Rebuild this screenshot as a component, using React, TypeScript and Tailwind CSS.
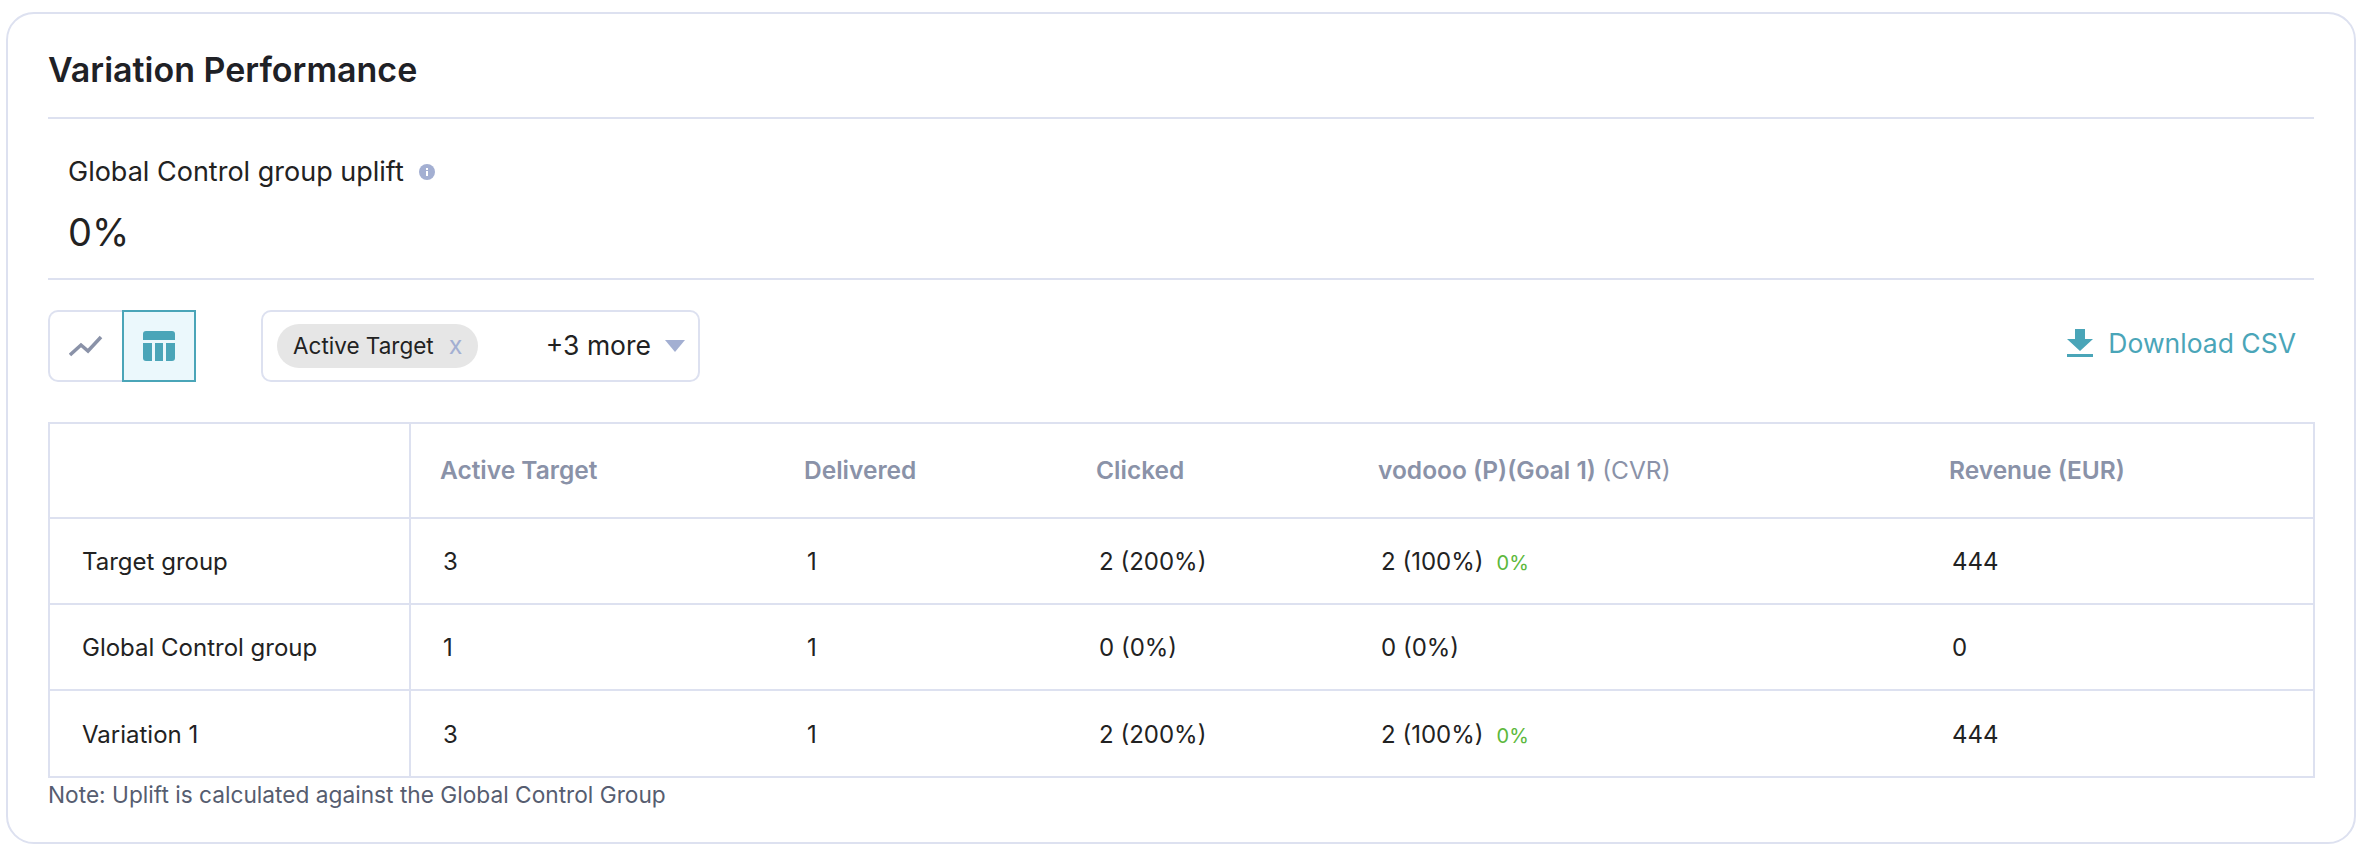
const rows = [
  { name: "Target group", active: "3", delivered: "1", clicked: "2 (200%)", goal: "2 (100%)", up: true, revenue: "444", height: "h-[86px]" },
  { name: "Global Control group", active: "1", delivered: "1", clicked: "0 (0%)", goal: "0 (0%)", up: false, revenue: "0", height: "h-[86px]" },
  { name: "Variation 1", active: "3", delivered: "1", clicked: "2 (200%)", goal: "2 (100%)", up: true, revenue: "444", height: "h-[87px]" },
];

function Header({ children, className = "" }: { children?: React.ReactNode; className?: string }) {
  return <th className={`border-y-2 border-[#dde1f0] pl-[29px] text-left text-[24.5px] font-semibold text-[#8a92a8] ${className}`}>{children}</th>;
}

function Cell({ children, className = "" }: { children?: React.ReactNode; className?: string }) {
  return <td className={`border-y-2 border-[#dde1f0] pl-[32px] pt-[2px] text-[24px] text-[#222222] ${className}`}>{children}</td>;
}

export default function App() {
  return (
    <div className="min-h-[854px] bg-white pl-[6px] pt-[12px] font-['Inter','Liberation_Sans',sans-serif]">
      <div className="h-[832px] w-[2350px] rounded-[28px] border-2 border-[#dde1f0] px-[40px]">
        <div className="flex h-[105px] items-center border-b-2 border-[#dde1f0] pt-[7px]">
          <h1 className="text-[34px] font-semibold text-[#1f2126]">Variation Performance</h1>
        </div>
        <div className="h-[161px] border-b-2 border-[#dde1f0] pl-[20px] pt-[37px]">
          <div className="flex items-center gap-[15px] text-[27px] leading-[32px] text-[#222222]">
            Global Control group uplift
            <svg width="16" height="16" viewBox="0 0 16 16" aria-hidden="true">
              <circle cx="8" cy="8" r="8" fill="#a3afd2" />
              <rect x="7" y="7" width="2" height="5" fill="white" />
              <rect x="7" y="4" width="2" height="2" fill="white" />
            </svg>
          </div>
          <div className="mt-[20px] text-[38px] leading-[48px] text-[#222222]">0%</div>
        </div>
        <div className="flex items-center pt-[30px]">
          <div className="flex h-[72px] w-[148px]">
            <button className="flex w-[74px] items-center justify-center rounded-l-[10px] border-2 border-r-0 border-[#dde1f0]">
              <svg width="34" height="24" viewBox="0 0 34 24" fill="none" stroke="#8a92a8" strokeWidth="3.5" aria-hidden="true">
                <path d="M1 21 L12 11 L19 17 L32 3" />
              </svg>
            </button>
            <button className="flex w-[74px] items-center justify-center border-2 border-[#4aa5b8] bg-[#ebf8fc]">
              <svg width="32" height="30" viewBox="0 0 32 30" fill="#4aa5b8" aria-hidden="true">
                <path d="M3 0 H29 A3 3 0 0 1 32 3 V9 H0 V3 A3 3 0 0 1 3 0 Z" />
                <path d="M0 12 H9 V30 H3 A3 3 0 0 1 0 27 Z" />
                <rect x="12" y="12" width="8" height="18" />
                <path d="M23 12 H32 V27 A3 3 0 0 1 29 30 H23 Z" />
              </svg>
            </button>
          </div>
          <div className="ml-[65px] flex h-[72px] w-[439px] items-center rounded-[10px] border-2 border-[#dde1f0] pl-[14px] pr-[13px]">
            <div className="flex h-[44px] w-[201px] items-center rounded-full bg-[#e6e6e6] pl-[16px] text-[22.5px] text-[#222222]">
              Active Target
              <span className="ml-[15px] text-[25px] text-[#a3afd2]">x</span>
            </div>
            <span className="ml-auto text-[26.5px] text-[#222222]">+3 more</span>
            <svg className="ml-[14px]" width="20" height="12" viewBox="0 0 20 12" aria-hidden="true">
              <path d="M0 0 H20 L10 12 Z" fill="#a3afd2" />
            </svg>
          </div>
          <a className="mb-[5px] ml-auto mr-[18px] flex items-center gap-[14px] text-[26.5px] text-[#4aa5b8]">
            <svg width="28" height="29" viewBox="0 0 28 29" fill="#4aa5b8" aria-hidden="true">
              <path d="M9 0 H19 V10 H27 L14 22 L1 10 H9 Z" />
              <rect x="1" y="25" width="26" height="3" />
            </svg>
            Download CSV
          </a>
        </div>
        <table className="mt-[40px] w-[2265px] table-fixed border-collapse border-2 border-[#dde1f0]">
          <colgroup>
            <col className="w-[361px]" />
            <col className="w-[365px]" />
            <col className="w-[292px]" />
            <col className="w-[282px]" />
            <col className="w-[571px]" />
            <col className="w-[394px]" />
          </colgroup>
          <thead>
            <tr className="h-[95px]">
              <Header className="border-r-2" />
              <Header>Active Target</Header>
              <Header>Delivered</Header>
              <Header>Clicked</Header>
              <Header>
                vodooo (P)(Goal 1) <span className="font-normal">(CVR)</span>
              </Header>
              <Header>Revenue (EUR)</Header>
            </tr>
          </thead>
          <tbody>
            {rows.map((r) => (
              <tr key={r.name} className={r.height}>
                <Cell className="border-r-2 text-[24.5px]">{r.name}</Cell>
                <Cell>{r.active}</Cell>
                <Cell>{r.delivered}</Cell>
                <Cell>{r.clicked}</Cell>
                <Cell>
                  {r.goal}
                  {r.up && <span className="ml-[13px] text-[20px] text-[#5cb83c]">0%</span>}
                </Cell>
                <Cell>{r.revenue}</Cell>
              </tr>
            ))}
          </tbody>
        </table>
        <p className="mt-[3px] text-[22.7px] leading-[28px] text-[#565d70]">Note: Uplift is calculated against the Global Control Group</p>
      </div>
    </div>
  );
}
